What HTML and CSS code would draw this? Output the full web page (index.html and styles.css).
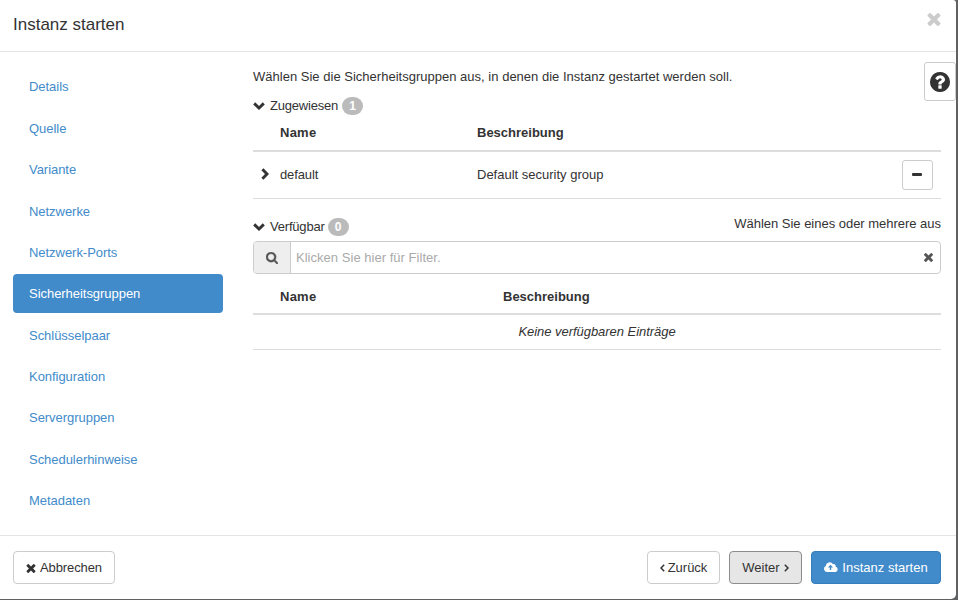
FILE: index.html
```
<!DOCTYPE html>
<html lang="de">
<head>
<meta charset="utf-8">
<title>Instanz starten</title>
<link rel="stylesheet" href="styles.css">
</head>
<body>
<svg class="defs" aria-hidden="true">
<symbol id="times" viewBox="302 302 1188 1188"><path d="M1490 1322q0 40-28 68l-136 136q-28 28-68 28t-68-28l-294-294-294 294q-28 28-68 28t-68-28l-136-136q-28-28-28-68t28-68l294-294-294-294q-28-28-28-68t28-68l136-136q28-28 68-28t68 28l294 294 294-294q28-28 68-28t68 28l136 136q28 28 28 68t-28 68l-294 294 294 294q28 28 28 68z" transform="translate(0 -64)"/></symbol>
<symbol id="question" viewBox="128 128 1536 1536"><path d="M1024 1376v-192q0-14-9-23t-23-9h-192q-14 0-23 9t-9 23v192q0 14 9 23t23 9h192q14 0 23-9t9-23zm256-672q0-88-55.5-163t-138.5-116-170-41q-243 0-371 213-15 24 8 42l132 100q7 6 19 6 16 0 25-12 53-68 86-92 34-24 86-24 48 0 85.5 26t37.5 59q0 38-20 61t-68 45q-63 28-115.5 86.5t-52.5 125.5v36q0 14 9 23t23 9h192q14 0 23-9t9-23q0-19 21.5-49.5t54.5-49.5q32-18 49-28.5t46-35 44.5-48 28-60.5 12.5-81zm384 192q0 209-103 385.5t-279.5 279.5-385.5 103-385.5-103-279.5-279.5-103-385.5 103-385.5 279.5-279.5 385.5-103 385.5 103 279.5 279.5 103 385.5z"/></symbol>
<symbol id="search" viewBox="64 128 1664 1664"><path stroke="currentColor" stroke-width="50" d="M1216 832q0-185-131.5-316.5t-316.5-131.5-316.5 131.5-131.5 316.5 131.5 316.5 316.5 131.5 316.5-131.5 131.5-316.5zm512 832q0 52-38 90t-90 38q-54 0-90-38l-343-342q-179 124-399 124-143 0-273.5-55.5t-225-150-150-225-55.5-273.5 55.5-273.5 150-225 225-150 273.5-55.5 273.5 55.5 225 150 150 225 55.5 273.5q0 220-124 399l343 343q37 37 37 90z"/></symbol>
<symbol id="down" viewBox="0 0 12 8"><path d="M1.2 1.4 6 6 10.8 1.4" fill="none" stroke="currentColor" stroke-width="2.9"/></symbol>
<symbol id="right" viewBox="0 0 8 12"><path d="M1.4 1.2 6 6 1.4 10.8" fill="none" stroke="currentColor" stroke-width="2.9"/></symbol>
<symbol id="angle" viewBox="0 0 5 8"><path d="M.8 .8 4 4 .8 7.2" fill="none" stroke="currentColor" stroke-width="1.5"/></symbol>
<symbol id="cloud" viewBox="0 0 14 10"><path fill-rule="evenodd" d="M3.2 10A3.2 3.2 0 0 1 1.9 3.9 3.8 3.8 0 0 1 9 2.2a2 2 0 0 1 2.6 2.6A2.65 2.65 0 0 1 11.4 10zM6.5 2.7 4 5.5H5.8V8H7.2V5.5H9z"/></symbol>
</svg>
<div class="modal">
  <header class="head">
    <h1>Instanz starten</h1>
    <button class="close" aria-label="Schließen"><svg><use href="#times"/></svg></button>
  </header>
  <div class="body">
    <nav class="nav">
      <a>Details</a>
      <a>Quelle</a>
      <a>Variante</a>
      <a>Netzwerke</a>
      <a>Netzwerk-Ports</a>
      <a class="active">Sicherheitsgruppen</a>
      <a>Schlüsselpaar</a>
      <a>Konfiguration</a>
      <a>Servergruppen</a>
      <a>Schedulerhinweise</a>
      <a>Metadaten</a>
    </nav>
    <main class="main">
      <p class="intro"><span>Wählen Sie die Sicherheitsgruppen aus, in denen die Instanz gestartet werden soll.</span></p>
      <div class="section"><svg class="down"><use href="#down"/></svg><span class="label">Zugewiesen</span><span class="badge">1</span></div>
      <div class="row thead assigned"><span></span><span>Name</span><span>Beschreibung</span></div>
      <div class="row item assigned">
        <svg class="right"><use href="#right"/></svg><span class="cell name">default</span><span class="cell">Default security group</span>
        <button class="remove" aria-label="Entfernen"><i></i></button>
      </div>
      <div class="section available"><svg class="down"><use href="#down"/></svg><span class="label">Verfügbar</span><span class="badge">0</span><span class="hint">Wählen Sie eines oder mehrere aus</span></div>
      <div class="filter">
        <span class="addon"><svg><use href="#search"/></svg></span>
        <span class="placeholder">Klicken Sie hier für Filter.</span>
        <svg class="clear"><use href="#times"/></svg>
      </div>
      <div class="row thead pool"><span></span><span>Name</span><span>Beschreibung</span></div>
      <div class="empty">Keine verfügbaren Einträge</div>
    </main>
    <button class="help" aria-label="Hilfe"><svg><use href="#question"/></svg></button>
  </div>
  <footer class="foot">
    <button class="btn cancel"><svg class="x"><use href="#times"/></svg><span>Abbrechen</span></button>
    <button class="btn back"><svg class="angle flip"><use href="#angle"/></svg><span>Zurück</span></button>
    <button class="btn next"><span>Weiter</span><svg class="angle"><use href="#angle"/></svg></button>
    <button class="btn launch"><svg class="cloud"><use href="#cloud"/></svg><span>Instanz starten</span></button>
  </footer>
</div>
</body>
</html>
```
FILE: styles.css
```
* { box-sizing: border-box; }
body {
  margin: 0;
  width: 958px;
  height: 600px;
  overflow: hidden;
  background: #606163;
  color: #333;
  font: 13px/19px "Liberation Sans", Arial, sans-serif;
}
svg { display: block; flex: none; fill: currentColor; }
button { font: inherit; color: inherit; padding: 0; margin: 0; }
.defs { position: absolute; width: 0; height: 0; }
.modal {
  width: 956px;
  height: 599px;
  display: flex;
  flex-direction: column;
  background: #fff;
  border-radius: 0 3px 5px 0;
}
.head {
  height: 52px;
  flex: none;
  display: flex;
  justify-content: space-between;
  padding: 13px 15px 0 13px;
  border-bottom: 1px solid #e5e5e5;
}
.head h1 { margin: 0; font-size: 17px; line-height: 23px; font-weight: 400; }
.close { border: 0; background: none; color: #ccc; height: 13px; }
.close svg { width: 14px; height: 13px; }
.body { height: 483px; flex: none; display: flex; position: relative; }
.nav { width: 210px; margin: 15.45px 30px 0 13px; display: flex; flex-direction: column; gap: 2px; letter-spacing: -.04px; }
.nav a {
  height: 39.37px;
  flex: none;
  padding: 10px 16px;
  border-radius: 4px;
  color: #428bca;
}
.nav .active { height: 39px; margin-bottom: .37px; background: #428bca; color: #fff; }
.main { width: 688px; }
.intro { margin: 15px 0 9px; height: 20px; letter-spacing: .013px; }
.section { display: flex; align-items: center; height: 20px; }
.section .down { width: 12px; height: 8px; margin: 0 5px 1px 0; }
.label { margin-top: -2px; letter-spacing: -.2px; }
.badge {
  margin-left: 4px;
  width: 21px;
  height: 18px;
  border-radius: 9px;
  background: #bbb;
  color: #fff;
  font-weight: 700;
  font-size: 12px;
  line-height: 18px;
  text-align: center;
}
.available .badge { margin-left: 3px; }
.hint { margin: -8px 0 0 auto; letter-spacing: -.02px; }
.row { display: grid; align-items: center; }
.assigned { grid-template-columns: 27px 197px 425px 31px; }
.pool { grid-template-columns: 27px 223px 1fr; }
.thead { height: 36px; padding-bottom: 2px; font-weight: 700; border-bottom: 2px solid #ddd; }
.thead span:nth-child(2) { letter-spacing: .25px; }
.item { height: 47px; border-bottom: 1px solid #ddd; }
.cell { padding-bottom: 2px; }
.name { letter-spacing: -.12px; }
.right { width: 8px; height: 12px; margin: 0 0 2px 8px; }
.remove {
  width: 31px;
  height: 30px;
  display: grid;
  place-items: center;
  background: #fff;
  border: 1px solid #ccc;
  border-radius: 3px;
}
.remove i { width: 10px; height: 3px; margin: 0 1px 1px 0; border-radius: 1px; background: #333; }
.available { margin-top: 18px; }
.filter {
  margin-top: 4px;
  height: 33px;
  display: flex;
  align-items: center;
  border: 1px solid #ccc;
  border-radius: 4px;
  overflow: hidden;
}
.addon {
  width: 37px;
  height: 31px;
  display: grid;
  place-items: center;
  background: #eee;
  border-right: 1px solid #ccc;
  color: #555;
}
.addon svg { width: 12px; height: 12px; }
.placeholder { margin-left: 5px; color: #aaa; letter-spacing: .03px; }
.clear { width: 9px; height: 9px; margin: 0 7px 0 auto; color: #555; }
.pool { height: 41px; padding: 6px 0 0; }
.empty { height: 35px; line-height: 34px; border-bottom: 1px solid #ddd; text-align: center; font-style: italic; letter-spacing: -.04px; }
.help {
  position: absolute;
  left: 924px;
  top: 10px;
  width: 32px;
  height: 39px;
  display: grid;
  place-items: center;
  background: #fff;
  border: 1px solid #ccc;
  border-radius: 3px;
}
.help svg { width: 20px; height: 20px; }
.foot { flex: 1; display: flex; padding: 15px 15px 0 13px; border-top: 1px solid #e5e5e5; }
.btn {
  height: 33px;
  display: flex;
  align-items: center;
  justify-content: center;
  border: 1px solid #ccc;
  border-radius: 4px;
  background: #fff;
}
.cancel { width: 102px; margin-right: auto; gap: 4px; letter-spacing: -.1px; }
.x { width: 10px; height: 9px; margin-top: 1px; }
.back { width: 73px; gap: 3px; }
.next { width: 73px; margin: 0 9px; gap: 4px; background: #e6e6e6; border-color: #8c8c8c; }
.angle { width: 5px; height: 8px; }
.flip { transform: scaleX(-1); }
.launch { width: 130px; gap: 4px; background: #428bca; border-color: #357ebd; color: #fff; }
.cloud { width: 14px; height: 10px; margin-bottom: 1px; }
```
